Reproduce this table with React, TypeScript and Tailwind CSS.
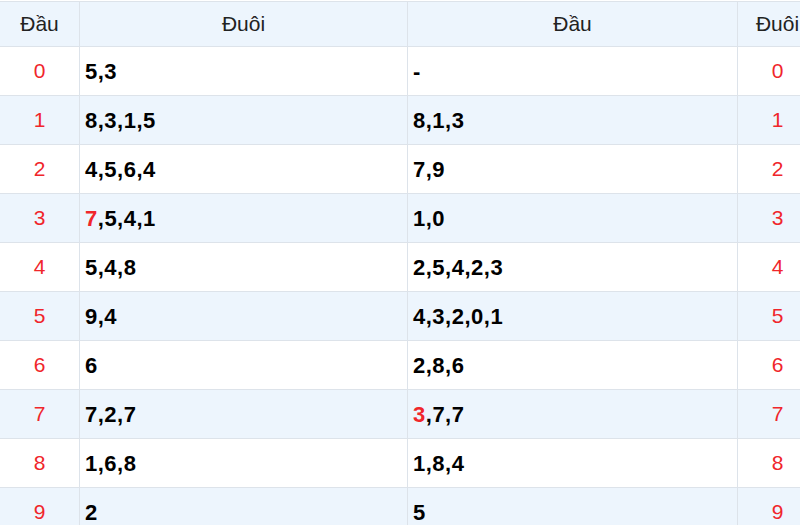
import React from "react";

const rows: { dau: number; duoi: string; dau2: string; hl1?: boolean; hl2?: boolean }[] = [
  { dau: 0, duoi: "5,3", dau2: "-" },
  { dau: 1, duoi: "8,3,1,5", dau2: "8,1,3" },
  { dau: 2, duoi: "4,5,6,4", dau2: "7,9" },
  { dau: 3, duoi: "7,5,4,1", dau2: "1,0", hl1: true },
  { dau: 4, duoi: "5,4,8", dau2: "2,5,4,2,3" },
  { dau: 5, duoi: "9,4", dau2: "4,3,2,0,1" },
  { dau: 6, duoi: "6", dau2: "2,8,6" },
  { dau: 7, duoi: "7,2,7", dau2: "3,7,7", hl2: true },
  { dau: 8, duoi: "1,6,8", dau2: "1,8,4" },
  { dau: 9, duoi: "2", dau2: "5" },
];

// first number highlighted red when flagged
function Nums({ text, hl }: { text: string; hl?: boolean }) {
  if (!hl) return <>{text}</>;
  const [first, ...rest] = text.split(",");
  return (
    <>
      <span className="text-[#f0262b]">{first}</span>,{rest.join(",")}
    </>
  );
}

export default function App() {
  return (
    <div className="w-[800px] h-[525px] overflow-hidden bg-white pt-px font-['Liberation_Sans',Arial,sans-serif]">
      <div className="grid w-[818px] grid-cols-[80px_328px_330px_80px] border-t border-[#dde3ea]">
        {["Đầu", "Đuôi", "Đầu", "Đuôi"].map((h, i) => (
          <div
            key={i}
            className="flex h-[45px] items-center justify-center border-b border-r border-[#dde3ea] bg-[#edf5fd] text-[21px] text-[#222]"
          >
            {h}
          </div>
        ))}
        {rows.map((r, i) => {
          const bg = i % 2 === 1 ? "bg-[#edf5fd]" : "bg-white";
          return (
            <React.Fragment key={r.dau}>
              <div className={`flex h-[49px] items-center justify-center border-b border-r border-[#dde3ea] text-[21px] text-[#f0262b] ${bg}`}>
                {r.dau}
              </div>
              <div className={`flex h-[49px] items-center border-b border-r border-[#dde3ea] pl-[5px] text-[22px] font-bold tracking-[0.5px] text-black ${bg}`}>
                <Nums text={r.duoi} hl={r.hl1} />
              </div>
              <div className={`flex h-[49px] items-center border-b border-r border-[#dde3ea] pl-[5px] text-[22px] font-bold tracking-[0.5px] text-black ${bg}`}>
                <Nums text={r.dau2} hl={r.hl2} />
              </div>
              <div className={`flex h-[49px] items-center justify-center border-b border-r border-[#dde3ea] text-[21px] text-[#f0262b] ${bg}`}>
                {r.dau}
              </div>
            </React.Fragment>
          );
        })}
      </div>
    </div>
  );
}
